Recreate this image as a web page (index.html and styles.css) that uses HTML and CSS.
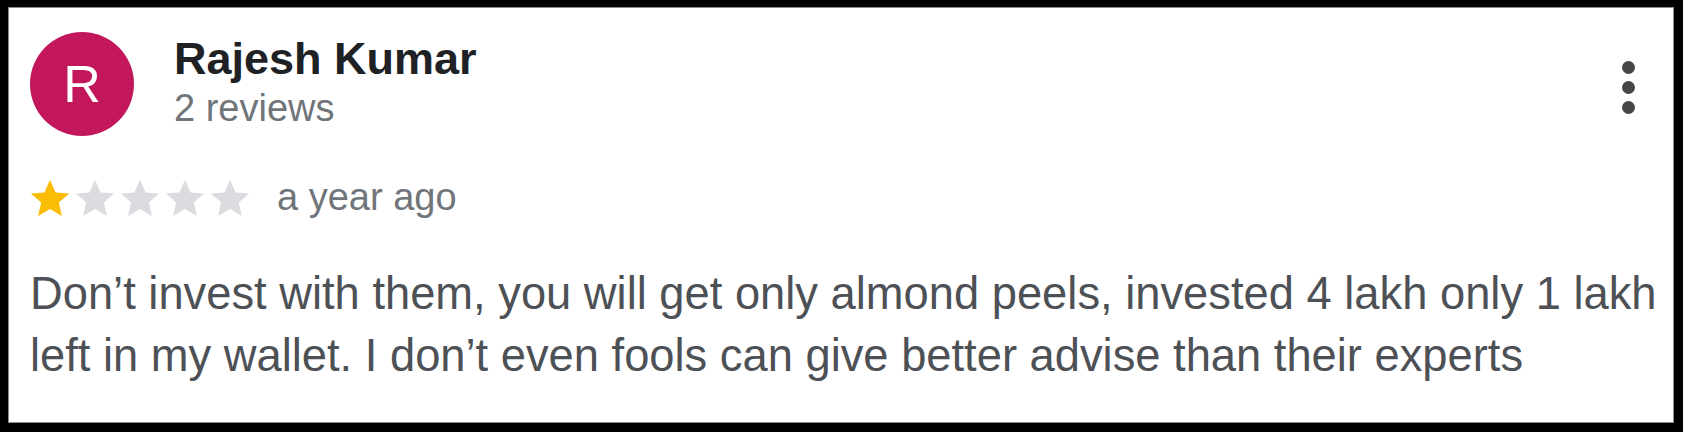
FILE: index.html
```html
<!DOCTYPE html>
<html>

<head>
  <title>Review</title>
  <link rel="stylesheet" href="styles.css">
</head>

<body>
  <div class="review-card">
    <div class="review-header">
      <div class="avatar">R</div>
      <div class="reviewer">
        <div class="reviewer-name">Rajesh Kumar</div>
        <div class="reviewer-meta">2 reviews</div>
      </div>
      <button class="more-button" aria-label="More options">
        <span></span><span></span><span></span>
      </button>
    </div>

    <div class="review-rating">
      <div class="stars">
        <svg class="star filled" viewBox="0 0 24 24"><path d="M12 2.5l2.9 6.6 7.1.6-5.4 4.7 1.6 7-6.2-3.7-6.2 3.7 1.6-7L2 9.7l7.1-.6z"/></svg>
        <svg class="star" viewBox="0 0 24 24"><path d="M12 2.5l2.9 6.6 7.1.6-5.4 4.7 1.6 7-6.2-3.7-6.2 3.7 1.6-7L2 9.7l7.1-.6z"/></svg>
        <svg class="star" viewBox="0 0 24 24"><path d="M12 2.5l2.9 6.6 7.1.6-5.4 4.7 1.6 7-6.2-3.7-6.2 3.7 1.6-7L2 9.7l7.1-.6z"/></svg>
        <svg class="star" viewBox="0 0 24 24"><path d="M12 2.5l2.9 6.6 7.1.6-5.4 4.7 1.6 7-6.2-3.7-6.2 3.7 1.6-7L2 9.7l7.1-.6z"/></svg>
        <svg class="star" viewBox="0 0 24 24"><path d="M12 2.5l2.9 6.6 7.1.6-5.4 4.7 1.6 7-6.2-3.7-6.2 3.7 1.6-7L2 9.7l7.1-.6z"/></svg>
      </div>
      <span class="review-date">a year ago</span>
    </div>

    <p class="review-text">Don’t invest with them, you will get only almond peels, invested 4 lakh only 1 lakh left in my wallet. I don’t even fools can give better advise than their experts</p>
  </div>
</body>

</html>
```

FILE: styles.css
```css
:root {
  --avatar-pink: #c2185b;
  --name-dark: #202124;
  --meta-gray: #70757a;
  --text-gray: #4d5156;
  --star-gold: #fbbc04;
  --star-empty: #dadce0;
}

body {
  margin: 0;
  padding: 7px 9px 9px 8px;
  background-color: #000;
  font-family: "Liberation Sans", Arial, sans-serif;
}

.review-card {
  height: 416px;
  box-sizing: border-box;
  background-color: #fff;
  border: 1px solid #8a8a8a;
  padding: 24px 12px 0 21px;
  overflow: hidden;
}

.review-header {
  display: flex;
  align-items: flex-start;
}

.avatar {
  width: 104px;
  height: 104px;
  border-radius: 50%;
  background-color: var(--avatar-pink);
  color: #fff;
  font-size: 52px;
  line-height: 104px;
  text-align: center;
  flex-shrink: 0;
}

.reviewer {
  margin-left: 40px;
  padding-top: 2px;
  flex: 1;
}

.reviewer-name {
  font-size: 45px;
  font-weight: bold;
  line-height: 50px;
  color: var(--name-dark);
}

.reviewer-meta {
  margin-top: 1px;
  font-size: 38px;
  line-height: 46px;
  color: var(--meta-gray);
}

/* three dot menu */
.more-button {
  display: flex;
  flex-direction: column;
  gap: 7px;
  margin: 29px 26px 0 0;
  padding: 0;
  border: none;
  background: none;
  cursor: pointer;
}

.more-button span {
  width: 13px;
  height: 13px;
  border-radius: 50%;
  background-color: #444746;
}

.review-rating {
  display: flex;
  align-items: center;
  margin-top: 38px;
  height: 46px;
}

.stars {
  display: flex;
  margin-left: -3px;
  margin-top: 2px;
}

.star {
  width: 46px;
  height: 46px;
  margin-right: -1px;
  fill: var(--star-empty);
}

.star.filled {
  fill: var(--star-gold);
}

.review-date {
  margin-left: 25px;
  font-size: 38px;
  color: var(--meta-gray);
}

.review-text {
  margin: 43px 0 0;
  font-size: 45.3px;
  line-height: 62px;
  color: var(--text-gray);
}
```
